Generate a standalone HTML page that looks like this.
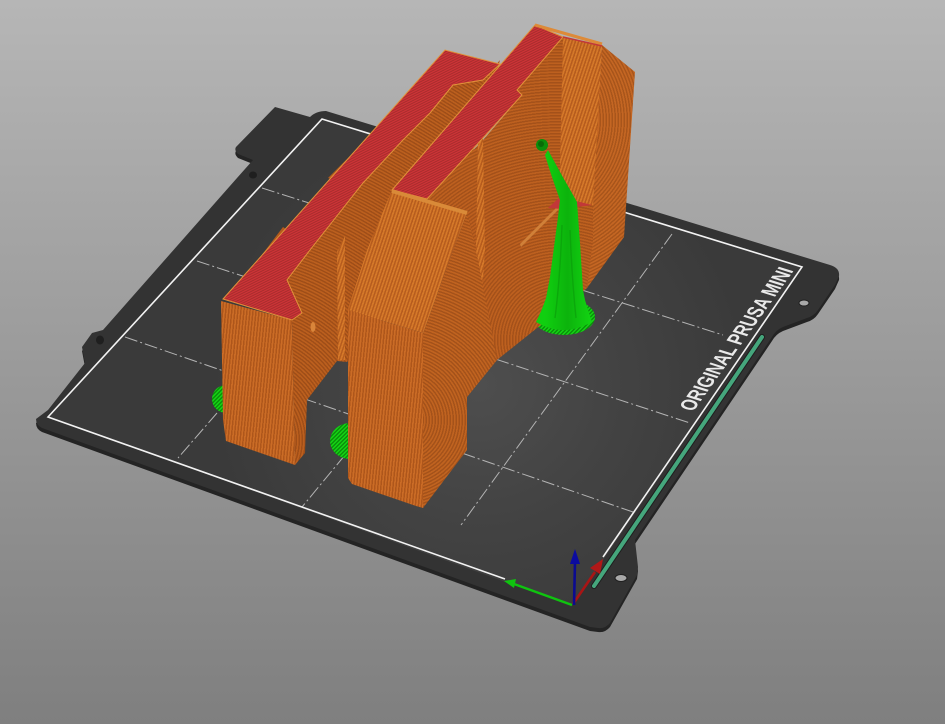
<!DOCTYPE html>
<html><head><meta charset="utf-8"><style>
html,body{margin:0;padding:0;width:945px;height:724px;overflow:hidden;background:#999}
svg{display:block}
</style></head><body>
<svg width="945" height="724" viewBox="0 0 945 724" xmlns="http://www.w3.org/2000/svg">
<defs>
<linearGradient id="bg" x1="0" y1="0" x2="0" y2="1"><stop offset="0" stop-color="#b6b6b6"/><stop offset="1" stop-color="#7f7f7f"/></linearGradient>
<radialGradient id="plate" gradientUnits="userSpaceOnUse" cx="480" cy="385" r="270"><stop offset="0" stop-color="#4e4e4e"/><stop offset=".5" stop-color="#434343"/><stop offset="1" stop-color="#3a3a3a"/></radialGradient>
<linearGradient id="fr" gradientUnits="userSpaceOnUse" x1="0" y1="0" x2="3" y2="0.3" spreadMethod="repeat"><stop offset="0" stop-color="#cb6c26"/><stop offset=".5" stop-color="#cb6c26"/><stop offset=".55" stop-color="#ae561b"/><stop offset="1" stop-color="#ae561b"/></linearGradient>
<linearGradient id="up" gradientUnits="userSpaceOnUse" x1="0" y1="0" x2="3" y2="1" spreadMethod="repeat"><stop offset="0" stop-color="#d47829"/><stop offset=".5" stop-color="#d47829"/><stop offset=".55" stop-color="#b65c1e"/><stop offset="1" stop-color="#b65c1e"/></linearGradient>
<radialGradient id="w1" gradientUnits="userSpaceOnUse" cx="560" cy="340" r="3" spreadMethod="repeat"><stop offset="0" stop-color="#bd601f"/><stop offset=".5" stop-color="#bd601f"/><stop offset=".55" stop-color="#a4511a"/><stop offset="1" stop-color="#a4511a"/></radialGradient>
<radialGradient id="w2" gradientUnits="userSpaceOnUse" cx="240" cy="440" r="3" spreadMethod="repeat"><stop offset="0" stop-color="#bb5f1e"/><stop offset=".5" stop-color="#bb5f1e"/><stop offset=".55" stop-color="#9f4e18"/><stop offset="1" stop-color="#9f4e18"/></radialGradient>
<radialGradient id="w3" gradientUnits="userSpaceOnUse" cx="400" cy="420" r="3" spreadMethod="repeat"><stop offset="0" stop-color="#c06320"/><stop offset=".5" stop-color="#c06320"/><stop offset=".55" stop-color="#a4521a"/><stop offset="1" stop-color="#a4521a"/></radialGradient>
<radialGradient id="w4" gradientUnits="userSpaceOnUse" cx="520" cy="120" r="3" spreadMethod="repeat"><stop offset="0" stop-color="#c46623"/><stop offset=".5" stop-color="#c46623"/><stop offset=".55" stop-color="#a8551b"/><stop offset="1" stop-color="#a8551b"/></radialGradient>
<linearGradient id="red" gradientUnits="userSpaceOnUse" x1="0" y1="0" x2="1" y2="2" spreadMethod="repeat"><stop offset="0" stop-color="#cb3338"/><stop offset=".6" stop-color="#cb3338"/><stop offset=".65" stop-color="#a52c2a"/><stop offset="1" stop-color="#a52c2a"/></linearGradient>
<linearGradient id="hatch" gradientUnits="userSpaceOnUse" x1="0" y1="0" x2="2" y2="2" spreadMethod="repeat"><stop offset="0" stop-color="#14d014"/><stop offset=".6" stop-color="#14d014"/><stop offset=".65" stop-color="#0a8a0a"/><stop offset="1" stop-color="#0a8a0a"/></linearGradient>
<linearGradient id="stalk" gradientUnits="userSpaceOnUse" x1="545" y1="0" x2="590" y2="0"><stop offset="0" stop-color="#10cf10"/><stop offset=".5" stop-color="#0cb30c"/><stop offset="1" stop-color="#12d212"/></linearGradient>
</defs>

<rect width="945" height="724" fill="url(#bg)"/>

<!-- bed side -->
<path transform="translate(0,4)" d="M275,107 L310,117 Q316,111 326,111 L830,265 Q840,268 839,276 L835,285 L818,310 Q814,316 807,318 L783,327 Q776,330 772,337 L635,540 L638,567 L637,575 L610,623 Q605,629 598,628 L590,627 L42,428 Q36,425 36,419 L48,410 L85,363 L82,347 L92,333 L103,330 L237,178 L253,160 L238,154 Q234,150 236,147 Z" fill="#242424"/>
<!-- bed top -->
<path d="M275,107 L310,117 Q316,111 326,111 L830,265 Q840,268 839,276 L835,285 L818,310 Q814,316 807,318 L783,327 Q776,330 772,337 L635,540 L638,567 L637,575 L610,623 Q605,629 598,628 L590,627 L42,428 Q36,425 36,419 L48,410 L85,363 L82,347 L92,333 L103,330 L237,178 L253,160 L238,154 Q234,150 236,147 Z" fill="#333"/>
<polygon points="322,119 802,267 572,606 48,417" fill="url(#plate)"/>

<!-- grid -->
<g stroke="#b4b4b4" stroke-width="1" stroke-dasharray="13 3 2 3" fill="none">
<path d="M262,188 L723,335"/>
<path d="M197,261 L690,423"/>
<path d="M125,337 L633,512"/>
<path d="M672,234 L461,525"/>
<path d="M345,455 L302,507"/>
<path d="M217,413 L178,458"/>
</g>

<!-- border -->
<g stroke="#f2f2f2" stroke-width="1.6" fill="none">
<path d="M505,579 L48,417 L322,119 L802,267 L603,557"/>
</g>

<!-- holes, pegs -->
<ellipse cx="621" cy="578" rx="6" ry="3.5" fill="#a8a8a8" stroke="#1f1f1f"/>
<ellipse cx="804" cy="303" rx="5" ry="3" fill="#a8a8a8" stroke="#1f1f1f"/>
<ellipse cx="253" cy="175" rx="4" ry="3.5" fill="#1f1f1f"/>
<ellipse cx="100" cy="340" rx="4" ry="4.5" fill="#1f1f1f"/>

<!-- logo text -->
<text transform="matrix(.58,-.814,.955,.3,693,412)" font-family="'Liberation Sans',sans-serif" font-weight="700" font-size="22" fill="#e9e9e9" textLength="174" lengthAdjust="spacingAndGlyphs">ORIGINAL PRUSA MINI</text>

<!-- strip -->
<path d="M762,337 L594,586" stroke="#1e1e1e" stroke-width="6" stroke-linecap="round"/>
<path d="M762,337 L594,586" stroke="#45a67c" stroke-width="4" stroke-linecap="round"/>

<!-- axes -->
<path d="M572,605 L514,584" stroke="#0fc40f" stroke-width="2.4"/>
<polygon points="504,581 516,579 514,588" fill="#0fc40f"/>
<path d="M573,604 L595,572" stroke="#a81515" stroke-width="2.6"/>
<polygon points="603,559 600,574 590,568" fill="#b01818"/>
<path d="M574,605 L575,562" stroke="#0b0b90" stroke-width="2.6"/>
<polygon points="575,549 580,564 570,564" fill="#0b0ba0"/>

<!-- support discs -->
<ellipse cx="226" cy="399" rx="14" ry="14" fill="url(#hatch)"/>
<ellipse cx="350" cy="441" rx="20" ry="18" fill="url(#hatch)"/>
<ellipse cx="564" cy="317" rx="31" ry="18" fill="url(#hatch)"/>

<!-- left block : bumps -->
<polygon points="255,264 283,227 290,232 262,264" fill="#b35a1c"/>
<polygon points="328,178 360,146 366,150 334,180" fill="#b35a1c"/>

<!-- left block back wall -->
<polygon points="292,320 302,313 287,280 310,250 363,183 403,140 430,113 453,85 483,80 500,60 450,230 347,362 337,361 307,400 305,453 295,465" fill="url(#w2)"/>
<polygon points="337,252 345,236 345,360 338,361" fill="url(#up)"/>
<ellipse cx="313" cy="327" rx="2.5" ry="5" fill="#d9853a"/>

<!-- left block front -->
<polygon points="221,301 292,320 295,465 226,441 223,420" fill="url(#fr)"/>

<!-- red strip 1 -->
<polygon points="223,299 445,50 500,64 483,80 453,85 430,113 403,140 363,183 310,250 287,280 302,313 292,320" fill="url(#red)" stroke="#e0923a" stroke-width="1"/>

<!-- second block: big wall -->
<polygon points="427,198 483,140 522,95 517,90 563,37 594,207 592,258 587,288 497,360 467,397 467,212" fill="url(#w1)"/>
<!-- end faces -->
<polygon points="602,45 635,72 624,237 587,288 592,205" fill="url(#w4)"/>
<polygon points="563,37 602,45 593,207 559,207" fill="url(#up)"/>
<!-- ledge -->
<polygon points="520,245 558,207 593,205 593,240 587,288 540,325 521,330" fill="url(#w1)"/>
<polygon points="520,244 558,206 560,208 521,247" fill="#d08038"/>
<polygon points="548,208 560,197 592,205 562,209" fill="#c23838"/>

<!-- fin on wall -->
<polygon points="478,141 483,138 485,250 482,292 477,298 476,250" fill="url(#up)"/>
<polygon points="470,303 480,298 479,307 470,313" fill="#d9853a"/>

<!-- second block lower side -->
<polygon points="423,333 467,212 478,260 497,360 467,397 467,450 423,508" fill="url(#w3)"/>
<!-- slanted front face -->
<polygon points="392,190 467,212 423,333 348,310 367,250" fill="url(#up)"/>
<!-- lower front face -->
<polygon points="348,310 423,333 423,508 416,506 352,484 348,478" fill="url(#fr)"/>

<!-- red strip 2 -->
<polygon points="392,190 535,25 563,37 517,90 522,95 483,138 427,199" fill="url(#red)" stroke="#e0923a" stroke-width="1"/>
<path d="M535,25 L602,44" stroke="#dd8a38" stroke-width="3" fill="none"/>
<path d="M563,37 L602,46" stroke="#c23838" stroke-width="1.5" fill="none"/>
<path d="M392,191 L467,213" stroke="#d98a38" stroke-width="4" fill="none"/>

<!-- green stalk -->
<path d="M545,155 Q551,175 560,200 L558,217 L550,277 L546,298 Q542,310 536,322 Q563,338 592,322 Q588,310 585,300 L583,290 L580,243 L577,202 Q562,176 548,150 Z" fill="url(#stalk)"/>
<ellipse cx="542" cy="145" rx="6" ry="6" fill="#0b8f0b"/>
<ellipse cx="541" cy="144" rx="3" ry="3" fill="#086b08"/>
<path d="M562,225 Q560,280 555,318 M570,230 Q572,280 576,318" stroke="#0a9a0a" stroke-width="1.4" fill="none" opacity=".6"/>
</svg>
</body></html>
